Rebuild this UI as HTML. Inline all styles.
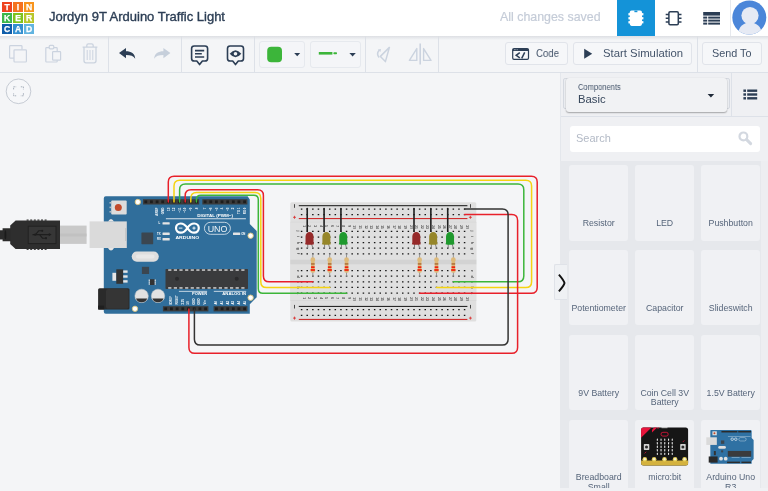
<!DOCTYPE html>
<html><head><meta charset="utf-8"><title>Tinkercad</title>
<style>
*{box-sizing:border-box;margin:0;padding:0}
html,body{width:768px;height:491px;overflow:hidden;background:#f4f5f7;font-family:"Liberation Sans",sans-serif;color:#2c3e55}
#hdr{position:absolute;left:0;top:0;width:768px;height:36px;background:#fff;z-index:5}
#hsh{position:absolute;left:0;top:36px;width:768px;height:3.500px;background:linear-gradient(#dcdee3,rgba(244,245,247,0));z-index:4}
#logo{position:absolute;left:2px;top:2px;width:32px;height:32px}
#logo i{position:absolute;width:10px;height:10px;font:bold 8.600px/10px "Liberation Sans",sans-serif;color:#fff;text-align:center;font-style:normal;-webkit-text-stroke:.25px #fff;will-change:transform}
.t{position:absolute;white-space:nowrap;transform-origin:0 50%;display:block;will-change:transform}
.card .l{will-change:transform}
#title{left:49px;top:8.700px;font-size:12.400px;line-height:17px;color:#2c3e55;-webkit-text-stroke:.35px #2c3e55}
#saved{left:500px;top:8.500px;font-size:12.400px;line-height:17px;color:#c5ccd8;-webkit-text-stroke:.2px #c5ccd8}
#tab1{position:absolute;left:617px;top:0;width:38px;height:36px;background:#1493d8}
#tb{position:absolute;left:0;top:36px;width:768px;height:37px;background:#f4f5f7;border-bottom:1px solid #dde1e8}
.vd{position:absolute;top:36px;width:1px;height:36px;background:#dde1e8}
.btn{position:absolute;top:42px;height:23px;border:1px solid #e1e4ea;border-radius:3px;background:#f6f7f9}
.btn .t{font-size:10.8px;line-height:21px;top:0;color:#44546a}
.dd{position:absolute;top:40.500px;height:27px;border:1px solid #e6e9ee;border-radius:3px;background:#f4f5f8}
#panel{position:absolute;left:560px;top:73px;width:208px;height:418px;background:#eff0f3}
#plist{position:absolute;left:0;top:88px;width:201px;height:330px;background:#e6e8ec}
#psb{position:absolute;left:201px;top:88px;width:7px;height:330px;background:#edeef1}
#pdd{position:absolute;left:6px;top:5px;width:160.500px;height:33.500px;background:#f1f2f4;border-radius:3px;box-shadow:0 1px 1.500px rgba(0,0,0,.3),0 0 1px rgba(0,0,0,.12)}
#phb{position:absolute;left:0;top:43px;width:208px;height:1px;background:#dde1e8}
#pvd{position:absolute;left:171px;top:0;width:1px;height:43px;background:#dde1e8}
#srch{position:absolute;left:9.500px;top:52.500px;width:190.500px;height:26.500px;background:#fff;border-radius:3px}
.card{position:absolute;width:59.400px;height:75.500px;background:#f0f1f4;border-radius:3px}
.card .l{position:absolute;left:-6px;right:-6px;top:53.500px;text-align:center;font-size:8.750px;line-height:8.900px;color:#56657a}
.card .l b{font-weight:normal;display:inline-block;transform:scaleX(1)}
#hand{position:absolute;left:554px;top:264px;width:13px;height:35.5px;background:#eff1f4;border:1px solid #dfe2e8;border-right:none;border-radius:2px 0 0 2px;z-index:3}
</style></head><body>
<svg style="position:absolute;left:0;top:0;will-change:transform" width="768" height="491" viewBox="0 0 768 491">
<g id="arduino">
<path d="M0 230.200h2.600v-1.900h8.400v13h-8.400v-1.900h-2.600z" fill="#2b2b2b"/><ellipse cx="5.400" cy="234.800" rx=".9" ry="4.600" fill="#1a1a1a"/><path d="M10.200 225.400l5.400-5h44.400v28.600h-44.400l-5.400-5z" fill="#2e2e2e"/><rect x="26.6" y="219.500" width="2" height="1.200" fill="#2e2e2e"/><rect x="26.6" y="248.700" width="2" height="1.200" fill="#2e2e2e"/><rect x="30.2" y="219.500" width="2" height="1.200" fill="#2e2e2e"/><rect x="30.2" y="248.700" width="2" height="1.200" fill="#2e2e2e"/><rect x="33.8" y="219.500" width="2" height="1.200" fill="#2e2e2e"/><rect x="33.8" y="248.700" width="2" height="1.200" fill="#2e2e2e"/><rect x="37.4" y="219.500" width="2" height="1.200" fill="#2e2e2e"/><rect x="37.4" y="248.700" width="2" height="1.200" fill="#2e2e2e"/><rect x="41.0" y="219.500" width="2" height="1.200" fill="#2e2e2e"/><rect x="41.0" y="248.700" width="2" height="1.200" fill="#2e2e2e"/><rect x="44.6" y="219.500" width="2" height="1.200" fill="#2e2e2e"/><rect x="44.6" y="248.700" width="2" height="1.200" fill="#2e2e2e"/><rect x="28.200" y="226.200" width="27.800" height="17.400" fill="#363636" stroke="#202020" stroke-width=".9"/><path d="M32.500 234.600h17M35.500 234.600l3.200-3.800h2.800M39.500 234.600l3 3.600h3" fill="none" stroke="#1e1e1e" stroke-width="1.100"/><circle cx="35.300" cy="234.600" r="1.200" fill="#1e1e1e"/><circle cx="42.200" cy="230.800" r="1.100" fill="#1e1e1e"/><path d="M48.800 232.900l2.800 1.700l-2.800 1.700z" fill="#1e1e1e"/><rect x="45" y="237.200" width="2" height="2" fill="#1e1e1e"/><rect x="60" y="225.600" width="26.600" height="18.300" fill="#c9c9c9"/><rect x="60" y="233.500" width="26.600" height="3" fill="#bdbdbd" opacity=".7"/><path d="M105.800 196.300h141.800l2.200 3.300v24.400l6.900 6.900v66.400l-6.900 6.900v9.500h-144q-2 0-2-2v-113.400q0-2 2-2z" fill="#306e9b"/><rect x="89.600" y="221.400" width="37.200" height="26.600" fill="#dadada"/><rect x="125.400" y="228" width=".8" height="13" fill="#bbb"/><path d="M108 221.400q3-5 6 0zM108 248q3 5 6 0z" fill="#e6e6e6"/><rect x="111.200" y="200.500" width="15.500" height="13.900" rx="1" fill="#dcdcdc"/><circle cx="118.300" cy="207.400" r="3.500" fill="#c24a2b"/><rect x="109.600" y="202" width="1.200" height="1.600" fill="#ccc"/><rect x="109.600" y="206.600" width="1.200" height="1.600" fill="#ccc"/><rect x="109.600" y="211" width="1.200" height="1.600" fill="#ccc"/><circle cx="137.8" cy="202" r="2.700" fill="#fff" stroke="#d8c27a" stroke-width=".9"/><circle cx="250.6" cy="235.7" r="2.700" fill="#fff" stroke="#d8c27a" stroke-width=".9"/><circle cx="250.6" cy="297.7" r="2.700" fill="#fff" stroke="#d8c27a" stroke-width=".9"/><circle cx="135" cy="308.8" r="2.700" fill="#fff" stroke="#d8c27a" stroke-width=".9"/><rect x="143.0" y="199.2" width="56.2" height="5.3" fill="#3b3b3b"/><rect x="144.4" y="200.4" width="2.800" height="2.800" fill="#1d1d1d"/><rect x="150.0" y="200.4" width="2.800" height="2.800" fill="#1d1d1d"/><rect x="155.7" y="200.4" width="2.800" height="2.800" fill="#1d1d1d"/><rect x="161.3" y="200.4" width="2.800" height="2.800" fill="#1d1d1d"/><rect x="166.9" y="200.4" width="2.800" height="2.800" fill="#1d1d1d"/><rect x="172.5" y="200.4" width="2.800" height="2.800" fill="#1d1d1d"/><rect x="178.1" y="200.4" width="2.800" height="2.800" fill="#1d1d1d"/><rect x="183.7" y="200.4" width="2.800" height="2.800" fill="#1d1d1d"/><rect x="189.4" y="200.4" width="2.800" height="2.800" fill="#1d1d1d"/><rect x="195.0" y="200.4" width="2.800" height="2.800" fill="#1d1d1d"/><rect x="202.3" y="199.2" width="45.1" height="5.3" fill="#3b3b3b"/><rect x="203.7" y="200.4" width="2.800" height="2.800" fill="#1d1d1d"/><rect x="209.4" y="200.4" width="2.800" height="2.800" fill="#1d1d1d"/><rect x="215.0" y="200.4" width="2.800" height="2.800" fill="#1d1d1d"/><rect x="220.6" y="200.4" width="2.800" height="2.800" fill="#1d1d1d"/><rect x="226.3" y="200.4" width="2.800" height="2.800" fill="#1d1d1d"/><rect x="231.9" y="200.4" width="2.800" height="2.800" fill="#1d1d1d"/><rect x="237.5" y="200.4" width="2.800" height="2.800" fill="#1d1d1d"/><rect x="243.2" y="200.4" width="2.800" height="2.800" fill="#1d1d1d"/><rect x="162.9" y="306.2" width="45.5" height="5.2" fill="#3b3b3b"/><rect x="164.3" y="307.4" width="2.800" height="2.800" fill="#1d1d1d"/><rect x="170.0" y="307.4" width="2.800" height="2.800" fill="#1d1d1d"/><rect x="175.7" y="307.4" width="2.800" height="2.800" fill="#1d1d1d"/><rect x="181.4" y="307.4" width="2.800" height="2.800" fill="#1d1d1d"/><rect x="187.1" y="307.4" width="2.800" height="2.800" fill="#1d1d1d"/><rect x="192.8" y="307.4" width="2.800" height="2.800" fill="#1d1d1d"/><rect x="198.5" y="307.4" width="2.800" height="2.800" fill="#1d1d1d"/><rect x="204.2" y="307.4" width="2.800" height="2.800" fill="#1d1d1d"/><rect x="213.6" y="306.2" width="33.8" height="5.2" fill="#3b3b3b"/><rect x="215.0" y="307.4" width="2.800" height="2.800" fill="#1d1d1d"/><rect x="220.7" y="307.4" width="2.800" height="2.800" fill="#1d1d1d"/><rect x="226.3" y="307.4" width="2.800" height="2.800" fill="#1d1d1d"/><rect x="231.9" y="307.4" width="2.800" height="2.800" fill="#1d1d1d"/><rect x="237.5" y="307.4" width="2.800" height="2.800" fill="#1d1d1d"/><rect x="243.2" y="307.4" width="2.800" height="2.800" fill="#1d1d1d"/><rect x="165.900" y="218.400" width="80" height=".8" fill="#fff"/><text x="197.200" y="216.800" font-family="Liberation Sans,sans-serif" font-weight="bold" font-size="3.900" fill="#fff" textLength="35.800" lengthAdjust="spacingAndGlyphs">DIGITAL (PWM~)</text><text transform="translate(158.3 207.600) rotate(-90)" text-anchor="end" font-family="Liberation Sans,sans-serif" font-weight="bold" font-size="3" fill="#fff">AREF</text><text transform="translate(163.9 207.600) rotate(-90)" text-anchor="end" font-family="Liberation Sans,sans-serif" font-weight="bold" font-size="3" fill="#fff">GND</text><text transform="translate(169.5 207.600) rotate(-90)" text-anchor="end" font-family="Liberation Sans,sans-serif" font-weight="bold" font-size="3" fill="#fff">13</text><text transform="translate(175.2 207.600) rotate(-90)" text-anchor="end" font-family="Liberation Sans,sans-serif" font-weight="bold" font-size="3" fill="#fff">12</text><text transform="translate(180.8 207.600) rotate(-90)" text-anchor="end" font-family="Liberation Sans,sans-serif" font-weight="bold" font-size="3" fill="#fff">~11</text><text transform="translate(186.4 207.600) rotate(-90)" text-anchor="end" font-family="Liberation Sans,sans-serif" font-weight="bold" font-size="3" fill="#fff">~10</text><text transform="translate(192.0 207.600) rotate(-90)" text-anchor="end" font-family="Liberation Sans,sans-serif" font-weight="bold" font-size="3" fill="#fff">~9</text><text transform="translate(197.6 207.600) rotate(-90)" text-anchor="end" font-family="Liberation Sans,sans-serif" font-weight="bold" font-size="3" fill="#fff">8</text><text transform="translate(206.3 207.600) rotate(-90)" text-anchor="end" font-family="Liberation Sans,sans-serif" font-weight="bold" font-size="3" fill="#fff">7</text><text transform="translate(211.9 207.600) rotate(-90)" text-anchor="end" font-family="Liberation Sans,sans-serif" font-weight="bold" font-size="3" fill="#fff">~6</text><text transform="translate(217.5 207.600) rotate(-90)" text-anchor="end" font-family="Liberation Sans,sans-serif" font-weight="bold" font-size="3" fill="#fff">~5</text><text transform="translate(223.2 207.600) rotate(-90)" text-anchor="end" font-family="Liberation Sans,sans-serif" font-weight="bold" font-size="3" fill="#fff">4</text><text transform="translate(228.8 207.600) rotate(-90)" text-anchor="end" font-family="Liberation Sans,sans-serif" font-weight="bold" font-size="3" fill="#fff">~3</text><text transform="translate(234.4 207.600) rotate(-90)" text-anchor="end" font-family="Liberation Sans,sans-serif" font-weight="bold" font-size="3" fill="#fff">2</text><text transform="translate(240.0 207.600) rotate(-90)" text-anchor="end" font-family="Liberation Sans,sans-serif" font-weight="bold" font-size="3" fill="#fff">TX 1</text><text transform="translate(245.6 207.600) rotate(-90)" text-anchor="end" font-family="Liberation Sans,sans-serif" font-weight="bold" font-size="3" fill="#fff">RX 0</text><rect x="162.5" y="222.2" width="7.200" height="2.400" rx=".5" fill="#e4e4e4"/><rect x="162.5" y="232.6" width="7.200" height="2.400" rx=".5" fill="#e4e4e4"/><rect x="162.5" y="238.1" width="7.200" height="2.400" rx=".5" fill="#e4e4e4"/><rect x="233" y="232.6" width="7.200" height="2.400" rx=".5" fill="#e4e4e4"/><text x="158.600" y="224.400" font-family="Liberation Sans,sans-serif" font-weight="bold" font-size="2.800" fill="#fff">L</text><text x="157" y="234.800" font-family="Liberation Sans,sans-serif" font-weight="bold" font-size="2.800" fill="#fff">TX</text><text x="157" y="240.300" font-family="Liberation Sans,sans-serif" font-weight="bold" font-size="2.800" fill="#fff">RX</text><text x="241.200" y="234.800" font-family="Liberation Sans,sans-serif" font-weight="bold" font-size="2.800" fill="#fff">ON</text><rect x="141.400" y="232.400" width="11.800" height="11.800" rx=".6" fill="#3b4650"/><g fill="none" stroke="#fff" stroke-width="2.200"><path d="M187.400 228c-2-3-4.200-4.500-6.800-4.500a4.600 4.600 0 0 0 0 9.200c2.600 0 4.800-1.500 6.800-4.700c2-3.200 4.200-4.500 6.800-4.500a4.600 4.600 0 0 1 0 9.200c-2.600 0-4.800-1.500-6.800-4.700z"/></g><path d="M178.800 228.100h3.600M192.400 228.100h3.200M194 226.500v3.200" stroke="#fff" stroke-width=".9" fill="none"/><text x="175.400" y="239.300" font-family="Liberation Sans,sans-serif" font-weight="bold" font-size="4" fill="#fff" textLength="23.800" lengthAdjust="spacingAndGlyphs">ARDUINO</text><rect x="204.400" y="222.300" width="26" height="12" rx="6" fill="none" stroke="#fff" stroke-width=".7"/><text x="207.700" y="231.700" font-family="Liberation Sans,sans-serif" font-size="9.400" fill="#fff" fill-opacity=".92" textLength="19.800" lengthAdjust="spacingAndGlyphs">UNO</text><rect x="131.700" y="251.400" width="27.100" height="10.300" rx="5.100" fill="#dedede"/><rect x="136" y="254.600" width="18.500" height="4" rx="2" fill="#e8e8e8"/><rect x="112.400" y="272.800" width="4" height="8" fill="#e6e6e6"/><rect x="116.300" y="269.300" width="6.900" height="14.500" fill="#333"/><rect x="123.200" y="270.4" width="4.400" height="2.400" fill="#e6e6e6"/><rect x="123.200" y="275.3" width="4.400" height="2.400" fill="#e6e6e6"/><rect x="123.200" y="280.2" width="4.400" height="2.400" fill="#e6e6e6"/><rect x="141.900" y="266.800" width="7.200" height="7.200" fill="#3b4650"/><rect x="150" y="279.200" width="4.600" height="5.800" fill="#333"/><rect x="148.600" y="279.6" width="1.400" height="1.200" fill="#e6e6e6"/><rect x="154.600" y="279.6" width="1.400" height="1.200" fill="#e6e6e6"/><rect x="148.600" y="281.5" width="1.400" height="1.200" fill="#e6e6e6"/><rect x="154.600" y="281.5" width="1.400" height="1.200" fill="#e6e6e6"/><rect x="148.600" y="283.4" width="1.400" height="1.200" fill="#e6e6e6"/><rect x="154.600" y="283.4" width="1.400" height="1.200" fill="#e6e6e6"/><rect x="98.100" y="288.200" width="31.400" height="21.400" rx="1.500" fill="#2a2a2a"/><rect x="106" y="289" width="22.600" height="19.800" rx="2" fill="#353535"/><rect x="98.100" y="305.600" width="6" height="4" fill="#1f1f1f"/><circle cx="141.6" cy="295.900" r="6.700" fill="#e2e2e2" stroke="#cfcfcf" stroke-width=".5"/><path d="M136.0 298.400h11.200a6 6 0 0 1 -11.200 0z" fill="#333"/><circle cx="158" cy="295.900" r="6.700" fill="#e2e2e2" stroke="#cfcfcf" stroke-width=".5"/><path d="M152.4 298.400h11.200a6 6 0 0 1 -11.200 0z" fill="#333"/><rect x="165.500" y="269" width="82.500" height="20" rx=".8" fill="#3a3b3d"/><rect x="168.2" y="269.400" width="3.200" height="1.300" fill="#e4e4e4"/><rect x="168.2" y="287.300" width="3.200" height="1.300" fill="#e4e4e4"/><rect x="173.8" y="269.400" width="3.200" height="1.300" fill="#e4e4e4"/><rect x="173.8" y="287.300" width="3.200" height="1.300" fill="#e4e4e4"/><rect x="179.4" y="269.400" width="3.200" height="1.300" fill="#e4e4e4"/><rect x="179.4" y="287.300" width="3.200" height="1.300" fill="#e4e4e4"/><rect x="185.1" y="269.400" width="3.200" height="1.300" fill="#e4e4e4"/><rect x="185.1" y="287.300" width="3.200" height="1.300" fill="#e4e4e4"/><rect x="190.7" y="269.400" width="3.200" height="1.300" fill="#e4e4e4"/><rect x="190.7" y="287.300" width="3.200" height="1.300" fill="#e4e4e4"/><rect x="196.3" y="269.400" width="3.200" height="1.300" fill="#e4e4e4"/><rect x="196.3" y="287.300" width="3.200" height="1.300" fill="#e4e4e4"/><rect x="201.9" y="269.400" width="3.200" height="1.300" fill="#e4e4e4"/><rect x="201.9" y="287.300" width="3.200" height="1.300" fill="#e4e4e4"/><rect x="207.5" y="269.400" width="3.200" height="1.300" fill="#e4e4e4"/><rect x="207.5" y="287.300" width="3.200" height="1.300" fill="#e4e4e4"/><rect x="213.2" y="269.400" width="3.200" height="1.300" fill="#e4e4e4"/><rect x="213.2" y="287.300" width="3.200" height="1.300" fill="#e4e4e4"/><rect x="218.8" y="269.400" width="3.200" height="1.300" fill="#e4e4e4"/><rect x="218.8" y="287.300" width="3.200" height="1.300" fill="#e4e4e4"/><rect x="224.4" y="269.400" width="3.200" height="1.300" fill="#e4e4e4"/><rect x="224.4" y="287.300" width="3.200" height="1.300" fill="#e4e4e4"/><rect x="230.0" y="269.400" width="3.200" height="1.300" fill="#e4e4e4"/><rect x="230.0" y="287.300" width="3.200" height="1.300" fill="#e4e4e4"/><rect x="235.6" y="269.400" width="3.200" height="1.300" fill="#e4e4e4"/><rect x="235.6" y="287.300" width="3.200" height="1.300" fill="#e4e4e4"/><rect x="241.3" y="269.400" width="3.200" height="1.300" fill="#e4e4e4"/><rect x="241.3" y="287.300" width="3.200" height="1.300" fill="#e4e4e4"/><circle cx="177" cy="278.800" r="2" fill="#2a2a2c"/><circle cx="236.700" cy="278.800" r="2" fill="#2a2a2c"/><rect x="178.900" y="290.900" width="28.200" height=".7" fill="#fff"/><rect x="213.800" y="290.900" width="32.400" height=".7" fill="#fff"/><text x="192" y="295.300" font-family="Liberation Sans,sans-serif" font-weight="bold" font-size="3.900" fill="#fff" textLength="15" lengthAdjust="spacingAndGlyphs">POWER</text><text x="222.300" y="295.300" font-family="Liberation Sans,sans-serif" font-weight="bold" font-size="3.900" fill="#fff" textLength="23.700" lengthAdjust="spacingAndGlyphs">ANALOG IN</text><text transform="translate(172.3 304.600) rotate(-90)" font-family="Liberation Sans,sans-serif" font-weight="bold" font-size="2.800" fill="#fff">IOREF</text><text transform="translate(177.9 304.600) rotate(-90)" font-family="Liberation Sans,sans-serif" font-weight="bold" font-size="2.800" fill="#fff">RESET</text><text transform="translate(183.5 304.600) rotate(-90)" font-family="Liberation Sans,sans-serif" font-weight="bold" font-size="2.800" fill="#fff">3.3V</text><text transform="translate(189.2 304.600) rotate(-90)" font-family="Liberation Sans,sans-serif" font-weight="bold" font-size="2.800" fill="#fff">5V</text><text transform="translate(194.8 304.600) rotate(-90)" font-family="Liberation Sans,sans-serif" font-weight="bold" font-size="2.800" fill="#fff">GND</text><text transform="translate(200.4 304.600) rotate(-90)" font-family="Liberation Sans,sans-serif" font-weight="bold" font-size="2.800" fill="#fff">GND</text><text transform="translate(206.0 304.600) rotate(-90)" font-family="Liberation Sans,sans-serif" font-weight="bold" font-size="2.800" fill="#fff">Vin</text><text transform="translate(217.4 304.600) rotate(-90)" font-family="Liberation Sans,sans-serif" font-weight="bold" font-size="2.800" fill="#fff">A0</text><text transform="translate(223.0 304.600) rotate(-90)" font-family="Liberation Sans,sans-serif" font-weight="bold" font-size="2.800" fill="#fff">A1</text><text transform="translate(228.6 304.600) rotate(-90)" font-family="Liberation Sans,sans-serif" font-weight="bold" font-size="2.800" fill="#fff">A2</text><text transform="translate(234.3 304.600) rotate(-90)" font-family="Liberation Sans,sans-serif" font-weight="bold" font-size="2.800" fill="#fff">A3</text><text transform="translate(239.9 304.600) rotate(-90)" font-family="Liberation Sans,sans-serif" font-weight="bold" font-size="2.800" fill="#fff">A4</text><text transform="translate(245.5 304.600) rotate(-90)" font-family="Liberation Sans,sans-serif" font-weight="bold" font-size="2.800" fill="#fff">A5</text></g>
<g id="bb">
<rect x="290.300" y="202.300" width="186" height="119.200" rx="1.500" fill="#dfdfdf"/><rect x="290.300" y="222" width="186" height="78.600" fill="#e0e0e0"/><rect x="290.300" y="221.800" width="186" height=".6" fill="#d6d6d6"/><rect x="290.300" y="300.300" width="186" height=".6" fill="#d6d6d6"/><rect x="290.300" y="259.700" width="186" height="4.600" fill="#d3d3d3"/><rect x="298.800" y="205.2" width="168.600" height="1" fill="#151515"/><rect x="298.800" y="218.1" width="168.600" height="1" fill="#cf1a1a"/><rect x="294.1" y="204.2" width=".8" height="3.600" fill="#222"/><path d="M293.0 217.3h3M294.5 215.8v3" stroke="#d92b2b" stroke-width=".8" fill="none"/><rect x="470.0" y="204.2" width=".8" height="3.600" fill="#222"/><path d="M468.9 217.3h3M470.4 215.8v3" stroke="#d92b2b" stroke-width=".8" fill="none"/><rect x="298.800" y="305.9" width="168.600" height="1" fill="#151515"/><rect x="298.800" y="318.9" width="168.600" height="1" fill="#cf1a1a"/><rect x="294.1" y="304.9" width=".8" height="3.600" fill="#222"/><path d="M293.0 318.1h3M294.5 316.6v3" stroke="#d92b2b" stroke-width=".8" fill="none"/><rect x="470.0" y="304.9" width=".8" height="3.600" fill="#222"/><path d="M468.9 318.1h3M470.4 316.6v3" stroke="#d92b2b" stroke-width=".8" fill="none"/><path d="M300.85 209.10H465.38" stroke="#141414" stroke-width="1.250" stroke-dasharray="1.500 4.120" fill="none"/><path d="M300.85 214.70H465.38" stroke="#141414" stroke-width="1.250" stroke-dasharray="1.500 4.120" fill="none"/><path d="M300.85 231.40H465.38" stroke="#141414" stroke-width="1.250" stroke-dasharray="1.500 4.120" fill="none"/><path d="M300.85 237.00H465.38" stroke="#141414" stroke-width="1.250" stroke-dasharray="1.500 4.120" fill="none"/><path d="M300.85 242.60H465.38" stroke="#141414" stroke-width="1.250" stroke-dasharray="1.500 4.120" fill="none"/><path d="M300.85 248.20H465.38" stroke="#141414" stroke-width="1.250" stroke-dasharray="1.500 4.120" fill="none"/><path d="M300.85 253.80H465.38" stroke="#141414" stroke-width="1.250" stroke-dasharray="1.500 4.120" fill="none"/><path d="M300.85 270.60H465.38" stroke="#141414" stroke-width="1.250" stroke-dasharray="1.500 4.120" fill="none"/><path d="M300.85 276.20H465.38" stroke="#141414" stroke-width="1.250" stroke-dasharray="1.500 4.120" fill="none"/><path d="M300.85 281.80H465.38" stroke="#141414" stroke-width="1.250" stroke-dasharray="1.500 4.120" fill="none"/><path d="M300.85 287.40H465.38" stroke="#141414" stroke-width="1.250" stroke-dasharray="1.500 4.120" fill="none"/><path d="M300.85 293.00H465.38" stroke="#141414" stroke-width="1.250" stroke-dasharray="1.500 4.120" fill="none"/><path d="M300.85 309.70H465.38" stroke="#141414" stroke-width="1.250" stroke-dasharray="1.500 4.120" fill="none"/><path d="M300.85 315.30H465.38" stroke="#141414" stroke-width="1.250" stroke-dasharray="1.500 4.120" fill="none"/><text transform="translate(302.7 225.3) rotate(90)" font-family="Liberation Sans,sans-serif" font-size="3.200" font-weight="bold" fill="#555">1</text><text transform="translate(302.7 297.29999999999995) rotate(90)" font-family="Liberation Sans,sans-serif" font-size="3.200" font-weight="bold" fill="#555">1</text><text transform="translate(308.3 225.3) rotate(90)" font-family="Liberation Sans,sans-serif" font-size="3.200" font-weight="bold" fill="#555">2</text><text transform="translate(308.3 297.29999999999995) rotate(90)" font-family="Liberation Sans,sans-serif" font-size="3.200" font-weight="bold" fill="#555">2</text><text transform="translate(313.9 225.3) rotate(90)" font-family="Liberation Sans,sans-serif" font-size="3.200" font-weight="bold" fill="#555">3</text><text transform="translate(313.9 297.29999999999995) rotate(90)" font-family="Liberation Sans,sans-serif" font-size="3.200" font-weight="bold" fill="#555">3</text><text transform="translate(319.6 225.3) rotate(90)" font-family="Liberation Sans,sans-serif" font-size="3.200" font-weight="bold" fill="#555">4</text><text transform="translate(319.6 297.29999999999995) rotate(90)" font-family="Liberation Sans,sans-serif" font-size="3.200" font-weight="bold" fill="#555">4</text><text transform="translate(325.2 225.3) rotate(90)" font-family="Liberation Sans,sans-serif" font-size="3.200" font-weight="bold" fill="#555">5</text><text transform="translate(325.2 297.29999999999995) rotate(90)" font-family="Liberation Sans,sans-serif" font-size="3.200" font-weight="bold" fill="#555">5</text><text transform="translate(330.8 225.3) rotate(90)" font-family="Liberation Sans,sans-serif" font-size="3.200" font-weight="bold" fill="#555">6</text><text transform="translate(330.8 297.29999999999995) rotate(90)" font-family="Liberation Sans,sans-serif" font-size="3.200" font-weight="bold" fill="#555">6</text><text transform="translate(336.4 225.3) rotate(90)" font-family="Liberation Sans,sans-serif" font-size="3.200" font-weight="bold" fill="#555">7</text><text transform="translate(336.4 297.29999999999995) rotate(90)" font-family="Liberation Sans,sans-serif" font-size="3.200" font-weight="bold" fill="#555">7</text><text transform="translate(342.0 225.3) rotate(90)" font-family="Liberation Sans,sans-serif" font-size="3.200" font-weight="bold" fill="#555">8</text><text transform="translate(342.0 297.29999999999995) rotate(90)" font-family="Liberation Sans,sans-serif" font-size="3.200" font-weight="bold" fill="#555">8</text><text transform="translate(347.7 225.3) rotate(90)" font-family="Liberation Sans,sans-serif" font-size="3.200" font-weight="bold" fill="#555">9</text><text transform="translate(347.7 297.29999999999995) rotate(90)" font-family="Liberation Sans,sans-serif" font-size="3.200" font-weight="bold" fill="#555">9</text><text transform="translate(353.3 225.3) rotate(90)" font-family="Liberation Sans,sans-serif" font-size="3.200" font-weight="bold" fill="#555">10</text><text transform="translate(353.3 297.29999999999995) rotate(90)" font-family="Liberation Sans,sans-serif" font-size="3.200" font-weight="bold" fill="#555">10</text><text transform="translate(358.9 225.3) rotate(90)" font-family="Liberation Sans,sans-serif" font-size="3.200" font-weight="bold" fill="#555">11</text><text transform="translate(358.9 297.29999999999995) rotate(90)" font-family="Liberation Sans,sans-serif" font-size="3.200" font-weight="bold" fill="#555">11</text><text transform="translate(364.5 225.3) rotate(90)" font-family="Liberation Sans,sans-serif" font-size="3.200" font-weight="bold" fill="#555">12</text><text transform="translate(364.5 297.29999999999995) rotate(90)" font-family="Liberation Sans,sans-serif" font-size="3.200" font-weight="bold" fill="#555">12</text><text transform="translate(370.1 225.3) rotate(90)" font-family="Liberation Sans,sans-serif" font-size="3.200" font-weight="bold" fill="#555">13</text><text transform="translate(370.1 297.29999999999995) rotate(90)" font-family="Liberation Sans,sans-serif" font-size="3.200" font-weight="bold" fill="#555">13</text><text transform="translate(375.8 225.3) rotate(90)" font-family="Liberation Sans,sans-serif" font-size="3.200" font-weight="bold" fill="#555">14</text><text transform="translate(375.8 297.29999999999995) rotate(90)" font-family="Liberation Sans,sans-serif" font-size="3.200" font-weight="bold" fill="#555">14</text><text transform="translate(381.4 225.3) rotate(90)" font-family="Liberation Sans,sans-serif" font-size="3.200" font-weight="bold" fill="#555">15</text><text transform="translate(381.4 297.29999999999995) rotate(90)" font-family="Liberation Sans,sans-serif" font-size="3.200" font-weight="bold" fill="#555">15</text><text transform="translate(387.0 225.3) rotate(90)" font-family="Liberation Sans,sans-serif" font-size="3.200" font-weight="bold" fill="#555">16</text><text transform="translate(387.0 297.29999999999995) rotate(90)" font-family="Liberation Sans,sans-serif" font-size="3.200" font-weight="bold" fill="#555">16</text><text transform="translate(392.6 225.3) rotate(90)" font-family="Liberation Sans,sans-serif" font-size="3.200" font-weight="bold" fill="#555">17</text><text transform="translate(392.6 297.29999999999995) rotate(90)" font-family="Liberation Sans,sans-serif" font-size="3.200" font-weight="bold" fill="#555">17</text><text transform="translate(398.2 225.3) rotate(90)" font-family="Liberation Sans,sans-serif" font-size="3.200" font-weight="bold" fill="#555">18</text><text transform="translate(398.2 297.29999999999995) rotate(90)" font-family="Liberation Sans,sans-serif" font-size="3.200" font-weight="bold" fill="#555">18</text><text transform="translate(403.9 225.3) rotate(90)" font-family="Liberation Sans,sans-serif" font-size="3.200" font-weight="bold" fill="#555">19</text><text transform="translate(403.9 297.29999999999995) rotate(90)" font-family="Liberation Sans,sans-serif" font-size="3.200" font-weight="bold" fill="#555">19</text><text transform="translate(409.5 225.3) rotate(90)" font-family="Liberation Sans,sans-serif" font-size="3.200" font-weight="bold" fill="#555">20</text><text transform="translate(409.5 297.29999999999995) rotate(90)" font-family="Liberation Sans,sans-serif" font-size="3.200" font-weight="bold" fill="#555">20</text><text transform="translate(415.1 225.3) rotate(90)" font-family="Liberation Sans,sans-serif" font-size="3.200" font-weight="bold" fill="#555">21</text><text transform="translate(415.1 297.29999999999995) rotate(90)" font-family="Liberation Sans,sans-serif" font-size="3.200" font-weight="bold" fill="#555">21</text><text transform="translate(420.7 225.3) rotate(90)" font-family="Liberation Sans,sans-serif" font-size="3.200" font-weight="bold" fill="#555">22</text><text transform="translate(420.7 297.29999999999995) rotate(90)" font-family="Liberation Sans,sans-serif" font-size="3.200" font-weight="bold" fill="#555">22</text><text transform="translate(426.3 225.3) rotate(90)" font-family="Liberation Sans,sans-serif" font-size="3.200" font-weight="bold" fill="#555">23</text><text transform="translate(426.3 297.29999999999995) rotate(90)" font-family="Liberation Sans,sans-serif" font-size="3.200" font-weight="bold" fill="#555">23</text><text transform="translate(432.0 225.3) rotate(90)" font-family="Liberation Sans,sans-serif" font-size="3.200" font-weight="bold" fill="#555">24</text><text transform="translate(432.0 297.29999999999995) rotate(90)" font-family="Liberation Sans,sans-serif" font-size="3.200" font-weight="bold" fill="#555">24</text><text transform="translate(437.6 225.3) rotate(90)" font-family="Liberation Sans,sans-serif" font-size="3.200" font-weight="bold" fill="#555">25</text><text transform="translate(437.6 297.29999999999995) rotate(90)" font-family="Liberation Sans,sans-serif" font-size="3.200" font-weight="bold" fill="#555">25</text><text transform="translate(443.2 225.3) rotate(90)" font-family="Liberation Sans,sans-serif" font-size="3.200" font-weight="bold" fill="#555">26</text><text transform="translate(443.2 297.29999999999995) rotate(90)" font-family="Liberation Sans,sans-serif" font-size="3.200" font-weight="bold" fill="#555">26</text><text transform="translate(448.8 225.3) rotate(90)" font-family="Liberation Sans,sans-serif" font-size="3.200" font-weight="bold" fill="#555">27</text><text transform="translate(448.8 297.29999999999995) rotate(90)" font-family="Liberation Sans,sans-serif" font-size="3.200" font-weight="bold" fill="#555">27</text><text transform="translate(454.4 225.3) rotate(90)" font-family="Liberation Sans,sans-serif" font-size="3.200" font-weight="bold" fill="#555">28</text><text transform="translate(454.4 297.29999999999995) rotate(90)" font-family="Liberation Sans,sans-serif" font-size="3.200" font-weight="bold" fill="#555">28</text><text transform="translate(460.1 225.3) rotate(90)" font-family="Liberation Sans,sans-serif" font-size="3.200" font-weight="bold" fill="#555">29</text><text transform="translate(460.1 297.29999999999995) rotate(90)" font-family="Liberation Sans,sans-serif" font-size="3.200" font-weight="bold" fill="#555">29</text><text transform="translate(465.7 225.3) rotate(90)" font-family="Liberation Sans,sans-serif" font-size="3.200" font-weight="bold" fill="#555">30</text><text transform="translate(465.7 297.29999999999995) rotate(90)" font-family="Liberation Sans,sans-serif" font-size="3.200" font-weight="bold" fill="#555">30</text><text transform="translate(296.600 230.6) rotate(90)" font-family="Liberation Sans,sans-serif" font-size="3.600" font-weight="bold" fill="#444">j</text><text transform="translate(471.400 230.6) rotate(90)" font-family="Liberation Sans,sans-serif" font-size="3.600" font-weight="bold" fill="#444">j</text><text transform="translate(296.600 236.2) rotate(90)" font-family="Liberation Sans,sans-serif" font-size="3.600" font-weight="bold" fill="#444">i</text><text transform="translate(471.400 236.2) rotate(90)" font-family="Liberation Sans,sans-serif" font-size="3.600" font-weight="bold" fill="#444">i</text><text transform="translate(296.600 241.8) rotate(90)" font-family="Liberation Sans,sans-serif" font-size="3.600" font-weight="bold" fill="#444">h</text><text transform="translate(471.400 241.8) rotate(90)" font-family="Liberation Sans,sans-serif" font-size="3.600" font-weight="bold" fill="#444">h</text><text transform="translate(296.600 247.4) rotate(90)" font-family="Liberation Sans,sans-serif" font-size="3.600" font-weight="bold" fill="#444">g</text><text transform="translate(471.400 247.4) rotate(90)" font-family="Liberation Sans,sans-serif" font-size="3.600" font-weight="bold" fill="#444">g</text><text transform="translate(296.600 253.0) rotate(90)" font-family="Liberation Sans,sans-serif" font-size="3.600" font-weight="bold" fill="#444">f</text><text transform="translate(471.400 253.0) rotate(90)" font-family="Liberation Sans,sans-serif" font-size="3.600" font-weight="bold" fill="#444">f</text><text transform="translate(296.600 269.8) rotate(90)" font-family="Liberation Sans,sans-serif" font-size="3.600" font-weight="bold" fill="#444">e</text><text transform="translate(471.400 269.8) rotate(90)" font-family="Liberation Sans,sans-serif" font-size="3.600" font-weight="bold" fill="#444">e</text><text transform="translate(296.600 275.4) rotate(90)" font-family="Liberation Sans,sans-serif" font-size="3.600" font-weight="bold" fill="#444">d</text><text transform="translate(471.400 275.4) rotate(90)" font-family="Liberation Sans,sans-serif" font-size="3.600" font-weight="bold" fill="#444">d</text><text transform="translate(296.600 281.0) rotate(90)" font-family="Liberation Sans,sans-serif" font-size="3.600" font-weight="bold" fill="#444">c</text><text transform="translate(471.400 281.0) rotate(90)" font-family="Liberation Sans,sans-serif" font-size="3.600" font-weight="bold" fill="#444">c</text><text transform="translate(296.600 286.6) rotate(90)" font-family="Liberation Sans,sans-serif" font-size="3.600" font-weight="bold" fill="#444">b</text><text transform="translate(471.400 286.6) rotate(90)" font-family="Liberation Sans,sans-serif" font-size="3.600" font-weight="bold" fill="#444">b</text><text transform="translate(296.600 292.2) rotate(90)" font-family="Liberation Sans,sans-serif" font-size="3.600" font-weight="bold" fill="#444">a</text><text transform="translate(471.400 292.2) rotate(90)" font-family="Liberation Sans,sans-serif" font-size="3.600" font-weight="bold" fill="#444">a</text></g>
<g id="parts">
<rect x="312.39" y="253.400" width=".9" height="23.300" fill="#8f8f8f"/><path d="M310.54 259.200q0-1.900 2.300-1.900q2.300 0 2.300 1.900v1.300l-.5 1v7l.5 1v1.400q0 1.900-2.300 1.900q-2.300 0-2.300-1.900v-1.400l.5-1v-7l-.5-1z" fill="#deba7a"/><rect x="311.04" y="263.300" width="3.600" height="1.300" fill="#a5612f"/><rect x="311.04" y="266.300" width="3.600" height="1.800" fill="#f0240f"/><rect x="310.74" y="269.100" width="4.200" height="1.800" fill="#f0240f"/><path d="M307.72 243.500v4.800M311.44 243.500l1.500 4.800" fill="none" stroke="#7f7f7f" stroke-width="1"/><path d="M305.03 244.200l.5-1.600v-6.200a4 4.400 0 0 1 8 0v6.200l.5 1.600q-4.500 1-9 0z" fill="#962a2a"/><rect x="306.42" y="207.800" width="1.600" height="24" rx=".8" fill="#1e1e1e"/><rect x="329.25" y="253.400" width=".9" height="23.300" fill="#8f8f8f"/><path d="M327.40 259.200q0-1.900 2.300-1.900q2.300 0 2.300 1.900v1.300l-.5 1v7l.5 1v1.400q0 1.900-2.300 1.900q-2.300 0-2.300-1.900v-1.400l.5-1v-7l-.5-1z" fill="#deba7a"/><rect x="327.90" y="263.300" width="3.600" height="1.300" fill="#a5612f"/><rect x="327.90" y="266.300" width="3.600" height="1.800" fill="#f0240f"/><rect x="327.60" y="269.100" width="4.200" height="1.800" fill="#f0240f"/><path d="M324.58 243.500v4.800M328.30 243.500l1.500 4.800" fill="none" stroke="#7f7f7f" stroke-width="1"/><path d="M321.89 244.200l.5-1.600v-6.200a4 4.400 0 0 1 8 0v6.200l.5 1.600q-4.500 1-9 0z" fill="#96862a"/><rect x="323.28" y="207.800" width="1.600" height="24" rx=".8" fill="#1e1e1e"/><rect x="346.11" y="253.400" width=".9" height="23.300" fill="#8f8f8f"/><path d="M344.26 259.200q0-1.900 2.300-1.900q2.300 0 2.300 1.900v1.300l-.5 1v7l.5 1v1.400q0 1.900-2.300 1.900q-2.300 0-2.300-1.900v-1.400l.5-1v-7l-.5-1z" fill="#deba7a"/><rect x="344.76" y="263.300" width="3.600" height="1.300" fill="#a5612f"/><rect x="344.76" y="266.300" width="3.600" height="1.800" fill="#f0240f"/><rect x="344.46" y="269.100" width="4.200" height="1.800" fill="#f0240f"/><path d="M341.44 243.500v4.800M345.16 243.500l1.500 4.800" fill="none" stroke="#7f7f7f" stroke-width="1"/><path d="M338.75 244.200l.5-1.600v-6.200a4 4.400 0 0 1 8 0v6.200l.5 1.600q-4.500 1-9 0z" fill="#1f992d"/><rect x="340.14" y="207.800" width="1.600" height="24" rx=".8" fill="#1e1e1e"/><rect x="419.17" y="253.400" width=".9" height="23.300" fill="#8f8f8f"/><path d="M417.32 259.200q0-1.900 2.300-1.900q2.300 0 2.300 1.900v1.300l-.5 1v7l.5 1v1.400q0 1.900-2.300 1.900q-2.300 0-2.300-1.900v-1.400l.5-1v-7l-.5-1z" fill="#deba7a"/><rect x="417.82" y="263.300" width="3.600" height="1.300" fill="#a5612f"/><rect x="417.82" y="266.300" width="3.600" height="1.800" fill="#f0240f"/><rect x="417.52" y="269.100" width="4.200" height="1.800" fill="#f0240f"/><path d="M414.50 243.500v4.800M418.22 243.500l1.500 4.800" fill="none" stroke="#7f7f7f" stroke-width="1"/><path d="M411.81 244.200l.5-1.600v-6.200a4 4.400 0 0 1 8 0v6.200l.5 1.600q-4.500 1-9 0z" fill="#962a2a"/><rect x="413.20" y="207.800" width="1.600" height="24" rx=".8" fill="#1e1e1e"/><rect x="436.03" y="253.400" width=".9" height="23.300" fill="#8f8f8f"/><path d="M434.18 259.200q0-1.900 2.300-1.900q2.300 0 2.300 1.900v1.300l-.5 1v7l.5 1v1.400q0 1.900-2.300 1.900q-2.300 0-2.300-1.900v-1.400l.5-1v-7l-.5-1z" fill="#deba7a"/><rect x="434.68" y="263.300" width="3.600" height="1.300" fill="#a5612f"/><rect x="434.68" y="266.300" width="3.600" height="1.800" fill="#f0240f"/><rect x="434.38" y="269.100" width="4.200" height="1.800" fill="#f0240f"/><path d="M431.36 243.500v4.800M435.08 243.500l1.500 4.800" fill="none" stroke="#7f7f7f" stroke-width="1"/><path d="M428.67 244.200l.5-1.600v-6.200a4 4.400 0 0 1 8 0v6.200l.5 1.600q-4.500 1-9 0z" fill="#96862a"/><rect x="430.06" y="207.800" width="1.600" height="24" rx=".8" fill="#1e1e1e"/><rect x="452.89" y="253.400" width=".9" height="23.300" fill="#8f8f8f"/><path d="M451.04 259.200q0-1.900 2.300-1.900q2.300 0 2.300 1.900v1.300l-.5 1v7l.5 1v1.400q0 1.900-2.300 1.900q-2.300 0-2.300-1.900v-1.400l.5-1v-7l-.5-1z" fill="#deba7a"/><rect x="451.54" y="263.300" width="3.600" height="1.300" fill="#a5612f"/><rect x="451.54" y="266.300" width="3.600" height="1.800" fill="#f0240f"/><rect x="451.24" y="269.100" width="4.200" height="1.800" fill="#f0240f"/><path d="M448.22 243.500v4.800M451.94 243.500l1.500 4.800" fill="none" stroke="#7f7f7f" stroke-width="1"/><path d="M445.53 244.200l.5-1.600v-6.200a4 4.400 0 0 1 8 0v6.200l.5 1.600q-4.500 1-9 0z" fill="#1f992d"/><rect x="446.92" y="207.800" width="1.600" height="24" rx=".8" fill="#1e1e1e"/></g>
<g id="wires">
<path d="M168.3 202.0L168.3 182.1Q168.3 176.3 174.1 176.3L531.4 176.3Q537.2 176.3 537.2 182.1L537.2 287.5Q537.2 293.3 531.4 293.3L419.6 293.3" fill="none" stroke="#e8202a" stroke-width="1.5" stroke-linecap="round"/>
<path d="M174.0 202.0L174.0 186.0Q174.0 180.2 179.8 180.2L525.8 180.2Q531.6 180.2 531.6 186.0L531.6 281.8Q531.6 287.6 525.8 287.6L436.5 287.6" fill="none" stroke="#f5d312" stroke-width="1.5" stroke-linecap="round"/>
<path d="M179.6 202.0L179.6 189.9Q179.6 184.1 185.4 184.1L518.0 184.1Q523.8 184.1 523.8 189.9L523.8 276.0Q523.8 281.8 518.0 281.8L453.3 281.8" fill="none" stroke="#3cb53a" stroke-width="1.5" stroke-linecap="round"/>
<path d="M185.2 202.0L185.2 195.6Q185.2 189.8 191.0 189.8L257.6 189.8Q263.4 189.8 263.4 195.6L263.4 276.0Q263.4 281.8 269.2 281.8L312.8 281.8" fill="none" stroke="#e8202a" stroke-width="1.5" stroke-linecap="round"/>
<path d="M190.8 202.0L190.8 198.4Q190.8 192.6 196.6 192.6L255.0 192.6Q260.8 192.6 260.8 198.4L260.8 281.8Q260.8 287.6 266.6 287.6L329.7 287.6" fill="none" stroke="#f5d312" stroke-width="1.5" stroke-linecap="round"/>
<path d="M196.4 202.0L196.4 199.7Q196.4 195.2 200.9 195.2L253.8 195.2Q258.3 195.2 258.3 199.7L258.3 288.7Q258.3 293.2 262.8 293.2L346.6 293.2" fill="none" stroke="#3cb53a" stroke-width="1.5" stroke-linecap="round"/>
<path d="M188.9 309.0L188.9 347.4Q188.9 353.2 194.7 353.2L511.8 353.2Q517.6 353.2 517.6 347.4L517.6 220.4Q517.6 214.6 511.8 214.6L464.6 214.6" fill="none" stroke="#e8202a" stroke-width="1.5" stroke-linecap="round"/>
<path d="M194.4 309.0L194.4 339.2Q194.4 345.0 200.2 345.0L502.3 345.0Q508.1 345.0 508.1 339.2L508.1 214.8Q508.1 209.0 502.3 209.0L464.6 209.0" fill="none" stroke="#333" stroke-width="1.5" stroke-linecap="round"/>
</g>
</svg>
<div id="hdr"><div id="logo"><i style="left:0px;top:0px;background:#ee431f">T</i><i style="left:11px;top:0px;background:#f47320">I</i><i style="left:22px;top:0px;background:#f8941d">N</i><i style="left:0px;top:11px;background:#3cb64a">K</i><i style="left:11px;top:11px;background:#7fc31d">E</i><i style="left:22px;top:11px;background:#b8c62b">R</i><i style="left:0px;top:22px;background:#0f5daa">C</i><i style="left:11px;top:22px;background:#338fd0">A</i><i style="left:22px;top:22px;background:#62b4e0">D</i></div>
<span class="t" id="title" style="transform:scaleX(1.05);">Jordyn 9T Arduino Traffic Light</span>
<span class="t" id="saved" style="transform:scaleX(1.0);">All changes saved</span>
<div id="tab1"></div>
<svg style="position:absolute;left:0;top:0" width="768" height="36" viewBox="0 0 768 36">
<!-- chip icon (white on blue) -->
<g fill="#fff"><rect x="629.800" y="10.500" width="12.200" height="15.400" rx="1.800"/>
<rect x="628.400" y="13.100" width="15" height="2.300"/><rect x="628.400" y="17.100" width="15" height="2.300"/><rect x="628.400" y="21.100" width="15" height="2.300"/></g>
<rect x="634.4" y="10.6" width="3" height="1.6" fill="#1493d8"/>
<!-- schematic icon -->
<g fill="none" stroke="#2c3e55" stroke-width="1.5"><rect x="668.900" y="11.700" width="9.400" height="13" rx="1.200"/>
<path d="M665.700 14.400h3.200M665.700 18.200h3.200M665.700 22h3.200M678.300 14.400h3.200M678.300 18.200h3.200M678.300 22h3.200"/></g>
<!-- table icon -->
<g fill="#2c3e55"><rect x="703.2" y="12" width="16.8" height="3.6"/><rect x="703.2" y="16.6" width="4" height="2"/><rect x="708.2" y="16.6" width="11.8" height="2"/>
<rect x="703.2" y="19.6" width="4" height="2"/><rect x="708.2" y="19.6" width="11.8" height="2"/><rect x="703.2" y="22.6" width="4" height="2"/><rect x="708.2" y="22.6" width="11.8" height="2"/></g>
<rect x="730" y="0" width="1" height="36" fill="#e6e9ee"/>
<clipPath id="av"><circle cx="749.3" cy="17.5" r="17"/></clipPath>
<circle cx="749.3" cy="17.5" r="17" fill="#4b86d9"/>
<g clip-path="url(#av)" fill="#e6eaf4"><circle cx="750" cy="15.6" r="8.6"/><ellipse cx="750" cy="33" rx="11.5" ry="10.5"/></g>
</svg>
</div><div id="hsh"></div>
<div id="tb"></div>
<div class="vd" style="left:108px"></div><div class="vd" style="left:181px"></div><div class="vd" style="left:254px"></div><div class="vd" style="left:365px"></div><div class="vd" style="left:438px"></div><div class="vd" style="left:697px"></div>
<div class="dd" style="left:259px;width:46px"></div><div class="dd" style="left:310px;width:51px"></div>
<div class="btn" style="left:504.500px;width:63px"><span class="t" style="transform:scaleX(0.895);left:30.300px">Code</span></div>
<div class="btn" style="left:572.500px;width:119.500px"><span class="t" style="transform:scaleX(1.05);left:29px">Start Simulation</span></div>
<div class="btn" style="left:702px;width:59.500px"><span class="t" style="transform:scaleX(1.0);left:9.300px">Send To</span></div>
<svg style="position:absolute;left:0;top:36px" width="768" height="37" viewBox="0 36 768 37">
<!-- copy -->
<g fill="#f4f5f7" stroke="#cbd3df" stroke-width="1.2"><rect x="9.6" y="45.6" width="12.4" height="12.6" rx=".8"/><rect x="14" y="49.8" width="12.4" height="12.2" rx=".8"/></g>
<!-- paste -->
<g fill="#f4f5f7" stroke="#cbd3df" stroke-width="1.2"><rect x="45.8" y="47.6" width="11.4" height="14.4" rx=".8"/><rect x="49.2" y="45.4" width="4.6" height="3.4" rx="1"/><rect x="52.6" y="51.6" width="8" height="8.6" rx=".6"/></g>
<!-- trash -->
<g fill="none" stroke="#cbd3df" stroke-width="1.3"><path d="M82.6 47.2h14.8M86.8 47v-1.6q0-1.6 1.6-1.6h3.2q1.6 0 1.6 1.6v1.6M84 47.6v13.2q0 2 2 2h8q2 0 2-2V47.6"/><path d="M87.2 50v10M90 50v10M92.8 50v10" stroke-width="1"/></g>
<!-- undo -->
<path d="M119 53l7-5v3.2c5 0 9 2 9.2 7.6c-1.6-3-4.6-3.9-9.2-3.9v3.4z" fill="#2c3e55"/>
<!-- redo -->
<path d="M170.4 53l-7-5v3.2c-5 0-9 2-9.2 7.6c1.6-3 4.6-3.9 9.2-3.9v3.4z" fill="#c6cfdb"/>
<!-- notes -->
<g fill="none" stroke="#2c3e55" stroke-width="1.600" stroke-linejoin="round"><path d="M194.200 46h10.800q2.600 0 2.600 2.600v9.800q0 2.600-2.600 2.600h-2.600l-2.800 3.600l-2.800-3.600h-2.600q-2.600 0-2.600-2.600v-9.800q0-2.600 2.600-2.600z"/><path d="M195 50.600h9.200M195 53.800h6.800M195 57h9.200" stroke-width="1.600"/></g>
<!-- eye note -->
<g fill="none" stroke="#2c3e55" stroke-width="1.600" stroke-linejoin="round"><path d="M230.100 46h10.800q2.600 0 2.600 2.600v9.800q0 2.600-2.600 2.600h-2.600l-2.800 3.600l-2.800-3.600h-2.600q-2.600 0-2.600-2.600v-9.800q0-2.600 2.600-2.600z"/></g>
<path d="M229.700 53.700q5.800-7 11.600 0q-5.800 7-11.600 0z" fill="#2c3e55"/><circle cx="235.500" cy="53.700" r="1.800" fill="#f4f5f7"/>
<!-- colour swatch -->
<rect x="267.200" y="46.800" width="14.800" height="15.400" rx="4" fill="#3cb53a"/>
<path d="M294.200 52.900h6l-3 3.400z" fill="#2c3e55"/>
<!-- wire type -->
<rect x="318.800" y="52" width="13.600" height="2.600" fill="#3cb53a"/><rect x="333.400" y="52.300" width="3.600" height="2" rx=".8" fill="#3cb53a"/>
<path d="M349.400 52.900h6.400l-3.200 3.600z" fill="#2c3e55"/>
<!-- rotate -->
<g fill="none" stroke="#cbd3df" stroke-width="1.500" stroke-linejoin="round"><path d="M389.400 47.400l-9 9l5 5.200z"/><path d="M379.200 50.200q-3.200 3.600 0 7.400"/></g><path d="M377.800 49.400l3.200-.4l-.6 3z" fill="#cbd3df"/>
<!-- mirror -->
<g fill="none" stroke="#cbd3df" stroke-width="1.400" stroke-linejoin="round"><path d="M420.200 43.400v21.200" stroke-width="1.600"/><path d="M416.800 48.600v11.800h-7.400z"/><path d="M423.600 48.600v11.800h7.400z"/></g>
<!-- code icon -->
<g fill="none" stroke="#2c3e55" stroke-width="1.200"><rect x="512.700" y="48.700" width="15.800" height="10.600" rx="1.300"/><path d="M512.700 50h15.800" stroke-width="2"/><path d="M519.800 52.700l-3.600 2.600l3.600 2.600M524.700 52.400l-3 6" stroke-width="1.500"/></g><path d="M514 49.700h3.600" stroke="#c9d0da" stroke-width=".8" stroke-dasharray=".8 .6"/>
<!-- play -->
<path d="M584.200 48.800l8 5l-8 5z" fill="#2c3e55"/>
</svg>
<svg style="position:absolute;left:5px;top:78px" width="28" height="28" viewBox="0 0 28 28"><circle cx="13.500" cy="13.300" r="12.300" fill="#f6f7f9" stroke="#b9bfc9" stroke-width=".800"/><path d="M8.600 11.400v-2.600h2.600M15.800 8.800h2.600v2.600M18.400 15.200v2.600h-2.600M11.200 17.800h-2.600v-2.600" fill="none" stroke="#a9b1bd" stroke-width="1" stroke-dasharray="1.600 .700"/></svg>
<div id="panel"><div id="plist"></div><div id="psb"></div>
<div class="card" style="left:9px;top:92px"><div class="l" style="top:54px">Resistor</div></div>
<div class="card" style="left:75px;top:92px"><div class="l" style="top:54px">LED</div></div>
<div class="card" style="left:140.9px;top:92px"><div class="l" style="top:54px">Pushbutton</div></div>
<div class="card" style="left:9px;top:176.8px"><div class="l" style="top:54px">Potentiometer</div></div>
<div class="card" style="left:75px;top:176.8px"><div class="l" style="top:54px">Capacitor</div></div>
<div class="card" style="left:140.9px;top:176.8px"><div class="l" style="top:54px">Slideswitch</div></div>
<div class="card" style="left:9px;top:261.7px"><div class="l" style="top:54px">9V Battery</div></div>
<div class="card" style="left:75px;top:261.7px"><div class="l" style="top:54px">Coin Cell 3V<br>Battery</div></div>
<div class="card" style="left:140.9px;top:261.7px"><div class="l" style="top:54px">1.5V Battery</div></div>
<div class="card" style="left:9px;top:346.7px"><div class="l" style="top:52px;line-height:10.200px">Breadboard<br>Small</div></div>
<div class="card" style="left:75px;top:346.7px"><div class="l" style="top:52px;line-height:10.200px">micro:bit</div></div>
<div class="card" style="left:140.9px;top:346.7px"><div class="l" style="top:52px;line-height:10.200px">Arduino Uno<br>R3</div></div>

<div id="phb"></div><div id="pvd"></div><div style="position:absolute;left:0;top:0;width:1px;height:88px;background:#e4e7ec"></div><div style="position:absolute;left:2.500px;top:4.500px;width:167px;height:31.500px;border:1px solid #d5d9e0;border-radius:2px;background:#eceef2"></div>
<div id="pdd"><span class="t" style="transform:scaleX(0.9);left:11.500px;top:4px;font-size:8.400px;line-height:10px;color:#44546a">Components</span><span class="t" style="transform:scaleX(1.0);left:11.500px;top:14.100px;font-size:11.300px;line-height:14px;color:#36465b">Basic</span>
<svg style="position:absolute;left:141px;top:15px" width="8" height="6"><path d="M.6 1h6.600l-3.300 3.600z" fill="#1f2a38"/></svg></div>
<svg style="position:absolute;left:183px;top:16px" width="15" height="11" viewBox="0 0 15 11"><g fill="#2c3e55"><rect x=".4" y=".5" width="2.600" height="2.400"/><rect x="4.200" y=".5" width="10" height="2.400"/><rect x=".4" y="4.300" width="2.600" height="2.400"/><rect x="4.200" y="4.300" width="10" height="2.400"/><rect x=".4" y="8.100" width="2.600" height="2.400"/><rect x="4.200" y="8.100" width="10" height="2.400"/></g></svg>
<div id="srch"><span class="t" style="transform:scaleX(1.0);left:6.300px;top:5.400px;font-size:11px;line-height:14px;color:#b3bac6">Search</span>
<svg style="position:absolute;left:168.500px;top:5.600px" width="16" height="16" viewBox="0 0 16 16"><circle cx="5.400" cy="5.400" r="3.900" fill="none" stroke="#d3d8e0" stroke-width="2.200"/><path d="M8.600 8.600l4 4" stroke="#d3d8e0" stroke-width="3" stroke-linecap="round"/></svg></div>
<svg style="position:absolute;left:0;top:0" width="208" height="418" viewBox="560 73 208 418">
<rect x="641.100" y="427.600" width="47" height="38" rx="2.500" fill="#161616"/><path d="M641.100 429.600q0-2 2-2h8.400l-10.400 10.200zM654 427.600h3.200l-5.200 4.800v-2.400zM657.800 427.600h1.600l-1.800 1.600z" fill="#e8143c"/><path d="M641.100 460.600h47v2.500q0 2.500-2.500 2.500h-42q-2.500 0-2.500-2.500z" fill="#d4b23e"/><circle cx="644.8" cy="459.300" r="2.300" fill="#e9d35a"/><circle cx="644.8" cy="459.100" r="1.200" fill="#f6f1d8"/><circle cx="654.1" cy="459.300" r="2.300" fill="#e9d35a"/><circle cx="654.1" cy="459.100" r="1.200" fill="#f6f1d8"/><circle cx="664.5" cy="459.300" r="2.300" fill="#e9d35a"/><circle cx="664.5" cy="459.100" r="1.200" fill="#f6f1d8"/><circle cx="675.1" cy="459.300" r="2.300" fill="#e9d35a"/><circle cx="675.1" cy="459.100" r="1.200" fill="#f6f1d8"/><circle cx="684.6" cy="459.300" r="2.300" fill="#e9d35a"/><circle cx="684.6" cy="459.100" r="1.200" fill="#f6f1d8"/><rect x="656.8" y="438.5" width="1.100" height="2.300" rx=".4" fill="#e6e6e6"/><rect x="656.8" y="442.1" width="1.100" height="2.300" rx=".4" fill="#e6e6e6"/><rect x="656.8" y="445.6" width="1.100" height="2.300" rx=".4" fill="#e6e6e6"/><rect x="656.8" y="449.1" width="1.100" height="2.300" rx=".4" fill="#e6e6e6"/><rect x="656.8" y="452.7" width="1.100" height="2.300" rx=".4" fill="#e6e6e6"/><rect x="660.5" y="438.5" width="1.100" height="2.300" rx=".4" fill="#e6e6e6"/><rect x="660.5" y="442.1" width="1.100" height="2.300" rx=".4" fill="#e6e6e6"/><rect x="660.5" y="445.6" width="1.100" height="2.300" rx=".4" fill="#e6e6e6"/><rect x="660.5" y="449.1" width="1.100" height="2.300" rx=".4" fill="#e6e6e6"/><rect x="660.5" y="452.7" width="1.100" height="2.300" rx=".4" fill="#e6e6e6"/><rect x="664.2" y="438.5" width="1.100" height="2.300" rx=".4" fill="#e6e6e6"/><rect x="664.2" y="442.1" width="1.100" height="2.300" rx=".4" fill="#e6e6e6"/><rect x="664.2" y="445.6" width="1.100" height="2.300" rx=".4" fill="#e6e6e6"/><rect x="664.2" y="449.1" width="1.100" height="2.300" rx=".4" fill="#e6e6e6"/><rect x="664.2" y="452.7" width="1.100" height="2.300" rx=".4" fill="#e6e6e6"/><rect x="668.0" y="438.5" width="1.100" height="2.300" rx=".4" fill="#e6e6e6"/><rect x="668.0" y="442.1" width="1.100" height="2.300" rx=".4" fill="#e6e6e6"/><rect x="668.0" y="445.6" width="1.100" height="2.300" rx=".4" fill="#e6e6e6"/><rect x="668.0" y="449.1" width="1.100" height="2.300" rx=".4" fill="#e6e6e6"/><rect x="668.0" y="452.7" width="1.100" height="2.300" rx=".4" fill="#e6e6e6"/><rect x="671.7" y="438.5" width="1.100" height="2.300" rx=".4" fill="#e6e6e6"/><rect x="671.7" y="442.1" width="1.100" height="2.300" rx=".4" fill="#e6e6e6"/><rect x="671.7" y="445.6" width="1.100" height="2.300" rx=".4" fill="#e6e6e6"/><rect x="671.7" y="449.1" width="1.100" height="2.300" rx=".4" fill="#e6e6e6"/><rect x="671.7" y="452.7" width="1.100" height="2.300" rx=".4" fill="#e6e6e6"/><rect x="661" y="432.300" width="7.200" height="3.800" rx="1.900" fill="none" stroke="#e8143c" stroke-width=".8"/><rect x="643.800" y="444.100" width="5.500" height="5.800" rx=".6" fill="#d2d2d2"/><circle cx="646.500" cy="447" r="1.500" fill="#2a2a2a"/><rect x="680.200" y="444.100" width="5.500" height="5.800" rx=".6" fill="#d2d2d2"/><circle cx="682.900" cy="447" r="1.500" fill="#2a2a2a"/><path d="M644.600 453.400l1.600-1.600M682.800 442l1.600-1.600" stroke="#e8143c" stroke-width=".7"/><rect x="661.500" y="427" width="6" height="1.200" fill="#c4c4c4"/><g transform="translate(706.300 430.100) scale(0.2832 0.2868) translate(-89.600 -196.300)"><path d="M105.800 196.300h141.800l2.200 3.300v24.400l6.900 6.900v66.400l-6.900 6.900v9.500h-144q-2 0-2-2v-113.400q0-2 2-2z" fill="#2f71a3"/><rect x="89.600" y="221.400" width="37.200" height="26.600" fill="#dadada"/><rect x="111.200" y="200.500" width="15.500" height="13.900" fill="#dcdcdc"/><circle cx="118.300" cy="207.400" r="3.500" fill="#c24a2b"/><rect x="143" y="199.200" width="56.200" height="5.300" fill="#2b2b2b"/><rect x="202.300" y="199.200" width="45.100" height="5.300" fill="#2b2b2b"/><rect x="162.900" y="306.200" width="45.500" height="5.200" fill="#2b2b2b"/><rect x="213.600" y="306.200" width="33.800" height="5.200" fill="#2b2b2b"/><rect x="165.500" y="269" width="82.500" height="20" fill="#3a3b3d"/><rect x="98.100" y="288.200" width="31.400" height="21.400" fill="#2a2a2a"/><circle cx="141.600" cy="295.900" r="6.700" fill="#e2e2e2"/><circle cx="158" cy="295.900" r="6.700" fill="#e2e2e2"/><rect x="131.700" y="251.400" width="27.100" height="10.300" rx="5.100" fill="#dedede"/><rect x="141.400" y="232.400" width="11.800" height="11.800" fill="#3b4650"/><rect x="116.300" y="269.300" width="6.900" height="14.500" fill="#333"/><rect x="141.900" y="266.800" width="7.200" height="7.200" fill="#3b4650"/><g fill="none" stroke="#fff" stroke-width="2.200"><circle cx="181" cy="228" r="4.500"/><circle cx="193.800" cy="228" r="4.500"/><rect x="204.400" y="222.300" width="26" height="12" rx="6" stroke-width="1.200"/></g><rect x="165.900" y="218" width="80" height="1.400" fill="#fff" opacity=".8"/><rect x="178.900" y="290.600" width="28.200" height="1.400" fill="#fff" opacity=".8"/><rect x="213.800" y="290.600" width="32.400" height="1.400" fill="#fff" opacity=".8"/></g></svg>

<div style="position:absolute;left:0;top:414.500px;width:208px;height:3.500px;background:#f0f1f4"></div>
</div>
<div id="hand"><svg style="position:absolute;left:0;top:0" width="13" height="34" viewBox="0 0 13 34"><path d="M3.900 9.600q5.300 6.300 5.600 8.400q-.3 2.100-5.600 8.400" fill="none" stroke="#111" stroke-width="1.900"/></svg></div>
</body></html>
